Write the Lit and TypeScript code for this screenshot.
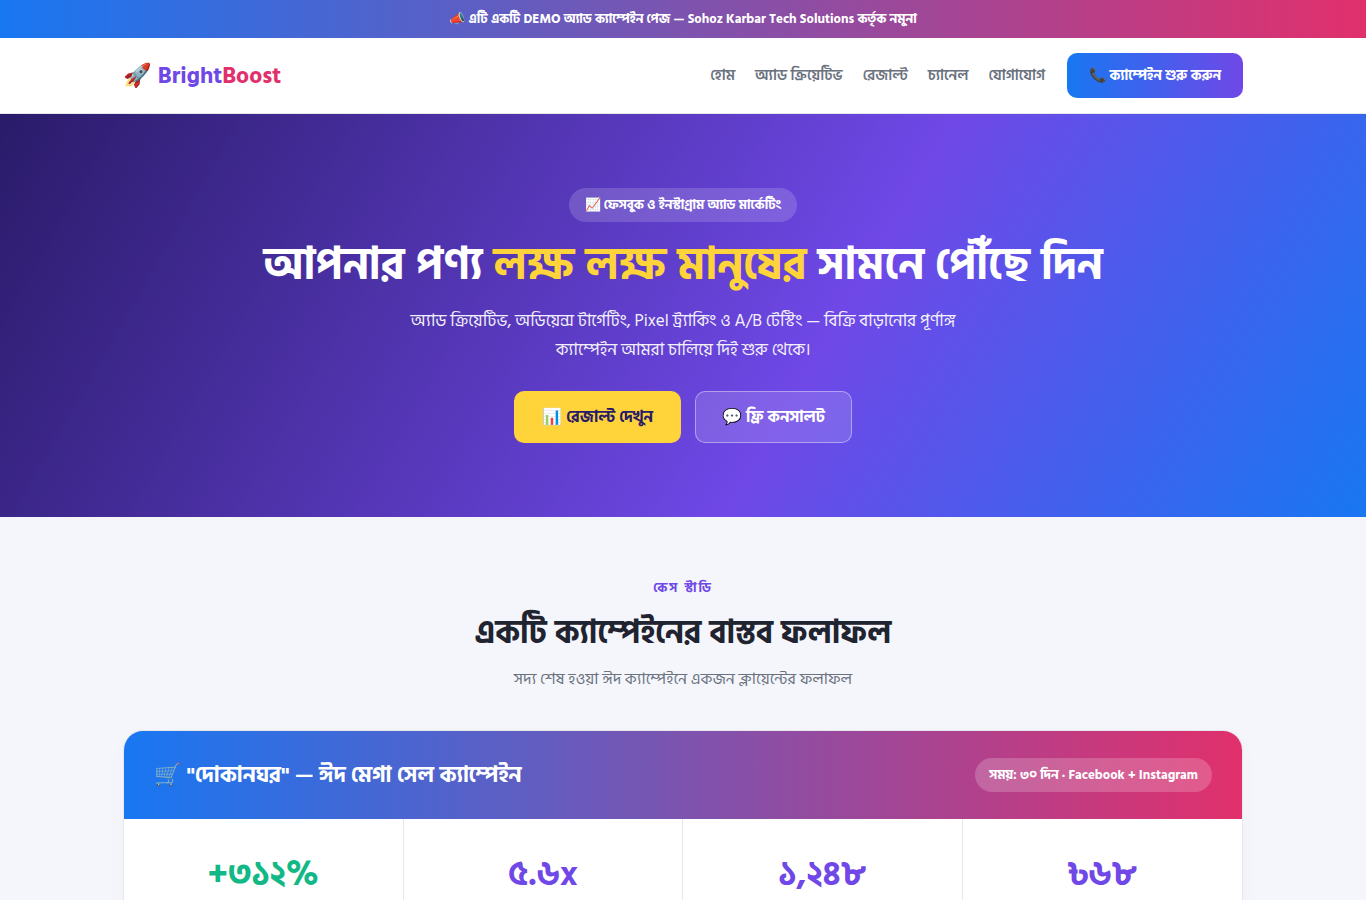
import { LitElement, html, css } from "lit";
import { customElement } from "lit/decorators.js";

interface Metric { value: string; good?: boolean }

const links = ["হোম", "অ্যাড ক্রিয়েটিভ", "রেজাল্ট", "চ্যানেল", "যোগাযোগ"];
const metrics: Metric[] = [
  { value: "+৩১২%", good: true },
  { value: "৫.৬x" },
  { value: "১,২৪৮" },
  { value: "৳৬৮" },
];

@customElement("app-root")
export class AppRoot extends LitElement {
  static styles = css`
    :host {
      display: block;
      height: 100vh;
      overflow-y: auto;
      scrollbar-width: none;
      background: #f4f6fb;
      color: #1f2430;
      font-family: "Hind Siliguri", "Noto Sans Bengali", "Noto Sans", sans-serif;
      font-size: 16px;
      line-height: 1.7;
    }
    * { box-sizing: border-box; }
    a { color: inherit; text-decoration: none; }
    h1, h2, h3, p { margin: 0; }
    .wrap { max-width: 1160px; margin: 0 auto; padding: 0 20px; }
    .demo {
      background: linear-gradient(90deg, #1877f2, #e1306c);
      color: #fff; text-align: center; font-size: 13px; font-weight: 700; padding: 8px;
    }
    .header { background: #fff; border-bottom: 1px solid #e5e7eb; }
    .bar { display: flex; align-items: center; justify-content: space-between; padding-top: 15px; padding-bottom: 15px; }
    .logo { font-size: 23px; font-weight: 700; color: #6f48e7; line-height: 40px; }
    .logo span { color: #e1306c; }
    .nav { display: flex; align-items: center; gap: 20px; font-size: 15px; font-weight: 600; color: #6b7280; }
    .call { background: linear-gradient(90deg, #1877f2, #6f48e7); color: #fff; font-weight: 700; font-size: 14px; line-height: 25px; padding: 10px 22px; border-radius: 10px; margin-left: 2px; }
    .hero { background: linear-gradient(120deg, #2a1b69, #6f48e7 60%, #1877f2); color: #fff; text-align: center; padding: 74px 20px; }
    .tag { display: inline-block; background: rgba(255,255,255,.16); border-radius: 30px; padding: 6px 16px; font-size: 13px; line-height: 22px; font-weight: 700; }
    .hero h1 { font-size: 44px; line-height: 56px; font-weight: 700; margin: 16px 0 13px; }
    .hero h1 span { color: #ffd43b; }
    .lead { font-size: 17px; line-height: 29px; max-width: 600px; margin: 0 auto 26px; opacity: .92; }
    .actions { display: flex; justify-content: center; gap: 14px; }
    .btn { border-radius: 10px; padding: 12px 28px; font-weight: 700; font-size: 16px; line-height: 28px; background: #ffd43b; color: #2a1b69; }
    .ghost { background: rgba(255,255,255,.14); border: 1px solid rgba(255,255,255,.4); color: #fff; padding: 11px 26px; }
    .case { padding: 60px 0; }
    .head { text-align: center; margin-bottom: 37px; }
    .eyebrow { font-size: 13px; line-height: 22px; font-weight: 700; letter-spacing: 2px; color: #6f48e7; }
    .head h2 { font-size: 32px; line-height: 54px; font-weight: 700; margin: 7px 0 6px; }
    .sub { font-size: 16px; line-height: 27px; color: #6b7280; }
    .card { border: 1px solid #e5e7eb; border-radius: 20px; overflow: hidden; background: #fff; box-shadow: 0 6px 24px rgba(31,36,48,.02); }
    .top { display: flex; flex-wrap: wrap; align-items: center; justify-content: space-between; gap: 12px; padding: 24px 30px; color: #fff; background: linear-gradient(90deg, #1877f2, #e1306c); }
    .top h3 { font-size: 22px; line-height: 40px; font-weight: 700; }
    .period { background: rgba(255,255,255,.2); border-radius: 20px; padding: 6px 14px; font-size: 13px; line-height: 22px; font-weight: 700; }
    .grid { display: grid; grid-template-columns: repeat(4, 1fr); }
    .metric { text-align: center; padding: 34px 20px; border-right: 1px solid #e5e7eb; color: #6f48e7; font-size: 34px; line-height: 44px; font-weight: 700; }
    .metric:last-child { border-right: 0; }
    .good { color: #12b886; }
  `;

  render() {
    return html`
      <div class="demo">📣 এটি একটি DEMO অ্যাড ক্যাম্পেইন পেজ — Sohoz Karbar Tech Solutions কর্তৃক নমুনা</div>
      <header class="header"><div class="wrap bar">
        <a class="logo" href="#home">🚀 Bright<span>Boost</span></a>
        <nav class="nav">
          ${links.map((l) => html`<a href="#section">${l}</a>`)}
          <a class="call" href="#contact">📞 ক্যাম্পেইন শুরু করুন</a>
        </nav>
      </div></header>
      <section class="hero">
        <span class="tag">📈 ফেসবুক ও ইনস্টাগ্রাম অ্যাড মার্কেটিং</span>
        <h1>আপনার পণ্য <span>লক্ষ লক্ষ মানুষের</span> সামনে পৌঁছে দিন</h1>
        <p class="lead">অ্যাড ক্রিয়েটিভ, অডিয়েন্স টার্গেটিং, Pixel ট্র্যাকিং ও A/B টেস্টিং — বিক্রি বাড়ানোর পূর্ণাঙ্গ ক্যাম্পেইন আমরা চালিয়ে দিই শুরু থেকে।</p>
        <div class="actions">
          <a class="btn" href="#results">📊 রেজাল্ট দেখুন</a>
          <a class="btn ghost" href="#contact">💬 ফ্রি কনসালট</a>
        </div>
      </section>
      <section class="case"><div class="wrap">
        <div class="head">
          <div class="eyebrow">কেস স্টাডি</div>
          <h2>একটি ক্যাম্পেইনের বাস্তব ফলাফল</h2>
          <p class="sub">সদ্য শেষ হওয়া ঈদ ক্যাম্পেইনে একজন ক্লায়েন্টের ফলাফল</p>
        </div>
        <article class="card">
          <div class="top"><h3>🛒 "দোকানঘর" — ঈদ মেগা সেল ক্যাম্পেইন</h3><span class="period">সময়: ৩০ দিন · Facebook + Instagram</span></div>
          <div class="grid">${metrics.map((m) => html`<div class="metric ${m.good ? "good" : ""}">${m.value}</div>`)}</div>
        </article>
      </div></section>
    `;
  }
}
